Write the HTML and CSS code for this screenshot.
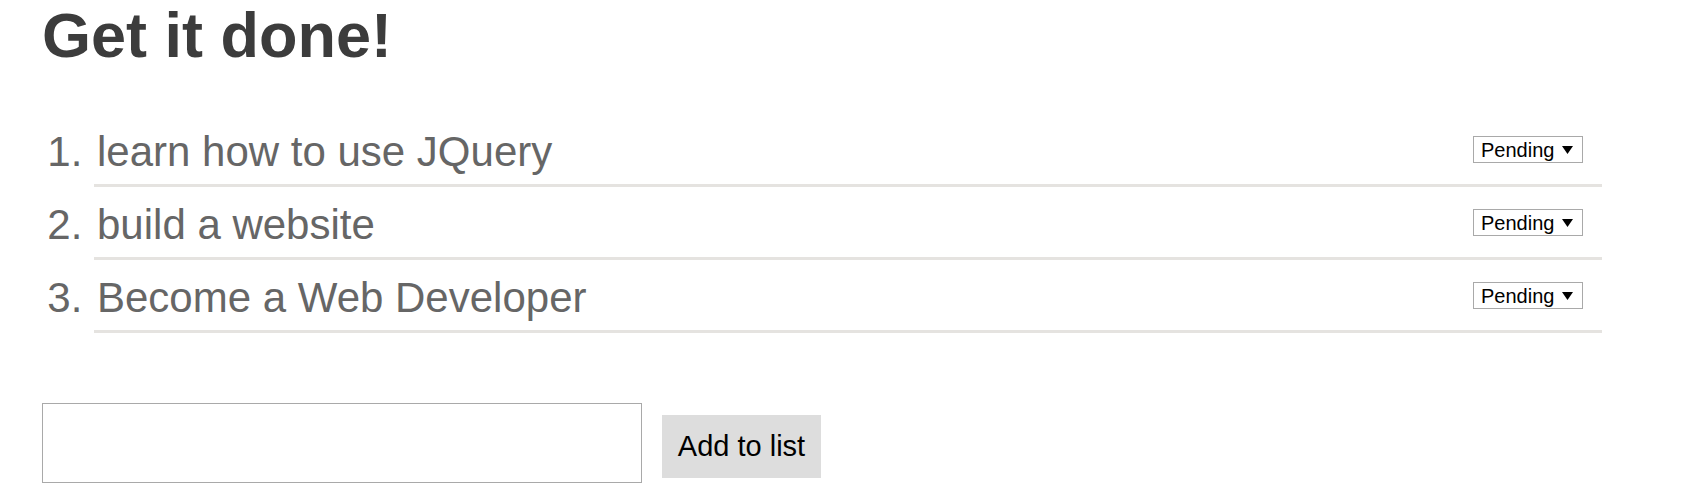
FILE: index.html
```html
<!DOCTYPE html>
<html>
<head>
<meta charset="utf-8">
<title>Get it done!</title>
<link rel="stylesheet" href="styles.css">
</head>
<body>
<div class="page">
  <h1 class="title">Get it done!</h1>
  <ol class="todo-list">
    <li class="todo-item">
      <select class="status"><option>Pending</option><option>Done</option></select>
      learn how to use JQuery
    </li>
    <li class="todo-item">
      <select class="status"><option>Pending</option><option>Done</option></select>
      build a website
    </li>
    <li class="todo-item">
      <select class="status"><option>Pending</option><option>Done</option></select>
      Become a Web Developer
    </li>
  </ol>
  <form class="add-form">
    <input class="add-input" type="text">
    <button class="add-button" type="button">Add to list</button>
  </form>
</div>
</body>
</html>
```
FILE: styles.css
```css
html, body {
  margin: 0;
  padding: 0;
  background: #ffffff;
}

.page {
  padding-left: 42px;
  width: 1560px;
  font-family: "Liberation Sans", Arial, sans-serif;
}

.title {
  margin: 3px 0 0;
  font-size: 63px;
  line-height: 64px;
  font-weight: bold;
  color: #3c3c3c;
}

.todo-list {
  margin: 47px 0 0;
  padding: 0 0 0 52px;
}

.todo-item {
  font-size: 42px;
  line-height: 48px;
  color: #666666;
  padding: 14px 0 8px 3px;
  border-bottom: 3px solid #e5e3e0;
}

.status {
  float: right;
  margin: 8px 19px 0 0;
  width: 110px;
  height: 27px;
  box-sizing: border-box;
  padding: 0 0 0 7px;
  border: 1px solid #a9a9a9;
  border-radius: 0;
  font-family: "Liberation Sans", Arial, sans-serif;
  font-size: 20px;
  color: #000000;
  -webkit-appearance: none;
  appearance: none;
  background: #ffffff url("data:image/svg+xml,%3Csvg xmlns='http://www.w3.org/2000/svg' width='11' height='8'%3E%3Cpath d='M0 0H11L5.5 8Z' fill='%23000'/%3E%3C/svg%3E") no-repeat right 9px center;
}

.add-form {
  display: flex;
  align-items: flex-start;
  margin-top: 70px;
}

.add-input {
  width: 600px;
  height: 80px;
  box-sizing: border-box;
  margin: 0;
  border: 1px solid #a9a9a9;
  border-radius: 0;
  padding: 0 6px;
  font-family: "Liberation Sans", Arial, sans-serif;
  font-size: 28px;
}

.add-button {
  margin: 12px 0 0 20px;
  width: 159px;
  height: 63px;
  border: none;
  border-radius: 0;
  background: #dddddd;
  color: #000000;
  font-family: "Liberation Sans", Arial, sans-serif;
  font-size: 29px;
  padding: 0;
}
```
